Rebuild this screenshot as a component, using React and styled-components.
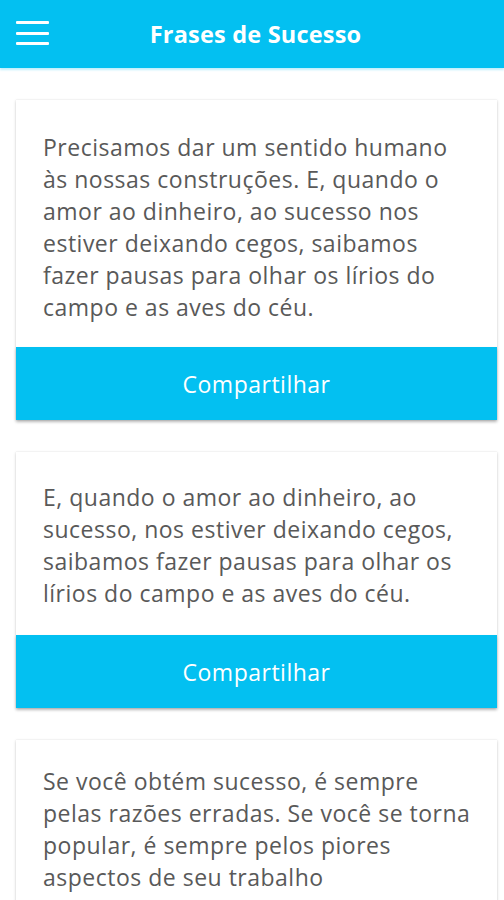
import React from "react";
import styled, { createGlobalStyle } from "styled-components";

const Global = createGlobalStyle`
  html, body { margin: 0; padding: 0; background: #ffffff; }
  body { font-family: "Open Sans", "Noto Sans", sans-serif; }
  * { box-sizing: border-box; }
`;

const Page = styled.div`
  width: 504px;
  min-height: 900px;
  overflow: hidden;
`;

const Header = styled.header`
  height: 68px;
  background: #03c0f1;
  display: flex;
  align-items: center;
  padding: 0 16px;
  box-shadow: 0 2px 2px rgba(3, 192, 241, 0.25);
`;

const Menu = styled.button`
  width: 33px;
  height: 24px;
  padding: 0;
  border: none;
  background: transparent;
  display: flex;
  flex-direction: column;
  justify-content: space-between;
  margin-top: -2px;
  span {
    display: block;
    height: 3px;
    background: #ffffff;
    border-radius: 1px;
  }
`;

const Title = styled.h1`
  flex: 1;
  margin: 0 26px 0 0;
  text-align: center;
  color: #ffffff;
  font-size: 23.5px;
  font-weight: 700;
  letter-spacing: 0.2px;
`;

const List = styled.main`
  display: flex;
  flex-direction: column;
  gap: 32px;
  padding: 32px 7px 32px 16px;
`;

const Card = styled.section`
  background: #ffffff;
  box-shadow: 0 1px 3px rgba(0, 0, 0, 0.18), 0 0 1px rgba(0, 0, 0, 0.12);
  display: flex;
  flex-direction: column;
`;

const Quote = styled.p`
  margin: 0;
  padding: ${(p) => p.$pt}px 10px ${(p) => p.$pb}px 27px;
  color: #595959;
  font-size: 23px;
  line-height: 32px;
  letter-spacing: 0.5px;
  white-space: nowrap;
`;

const Share = styled.button`
  height: 73px;
  border: none;
  background: #03c0f1;
  color: #ffffff;
  font-family: inherit;
  font-size: 23px;
  letter-spacing: 0.5px;
  cursor: pointer;
  box-shadow: 0 2px 3px rgba(0, 0, 0, 0.2);
`;

const quotes = [
  {
    lines: [
      "Precisamos dar um sentido humano",
      "às nossas construções. E, quando o",
      "amor ao dinheiro, ao sucesso nos",
      "estiver deixando cegos, saibamos",
      "fazer pausas para olhar os lírios do",
      "campo e as aves do céu.",
    ],
    pt: 31,
    pb: 24,
    share: true,
  },
  {
    lines: [
      "E, quando o amor ao dinheiro, ao",
      "sucesso, nos estiver deixando cegos,",
      "saibamos fazer pausas para olhar os",
      "lírios do campo e as aves do céu.",
    ],
    pt: 29,
    pb: 26,
    share: true,
  },
  {
    lines: [
      "Se você obtém sucesso, é sempre",
      "pelas razões erradas. Se você se torna",
      "popular, é sempre pelos piores",
      "aspectos de seu trabalho",
    ],
    pt: 25,
    pb: 24,
    share: true,
  },
];

export default function App() {
  return (
    <Page>
      <Global />
      <Header>
        <Menu aria-label="menu">
          <span />
          <span />
          <span />
        </Menu>
        <Title>Frases de Sucesso</Title>
      </Header>
      <List>
        {quotes.map((q, i) => (
          <Card key={i}>
            <Quote $pt={q.pt} $pb={q.pb}>
              {q.lines.map((l, j) => (
                <React.Fragment key={j}>
                  {l}
                  {j < q.lines.length - 1 && <br />}
                </React.Fragment>
              ))}
            </Quote>
            {q.share && <Share>Compartilhar</Share>}
          </Card>
        ))}
      </List>
    </Page>
  );
}
